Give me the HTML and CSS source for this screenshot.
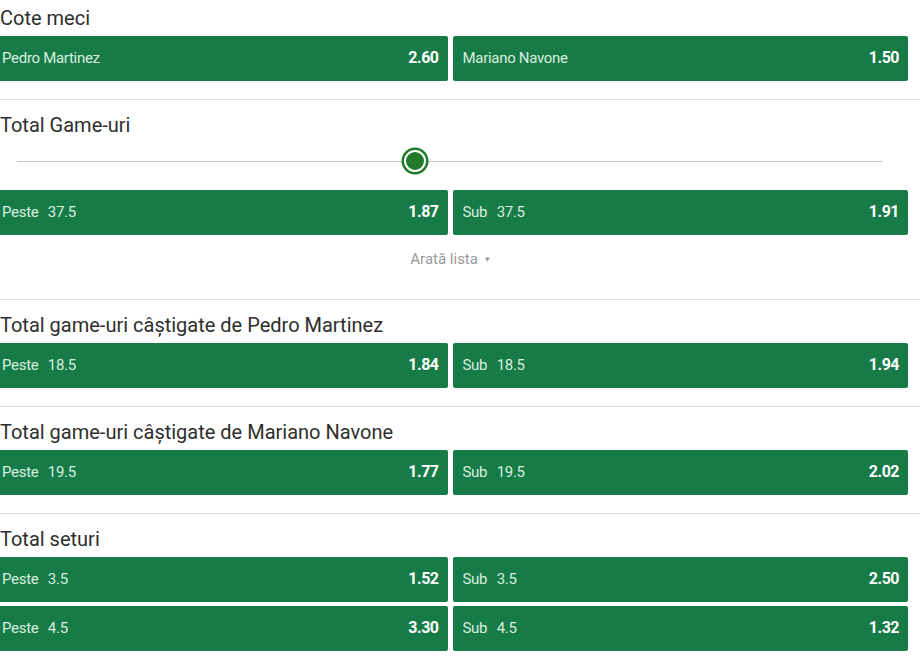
FILE: index.html
```html
<!DOCTYPE html>
<html lang="ro">
<head>
  <meta charset="UTF-8">
  <title>Cote meci</title>
  <link rel="stylesheet" href="styles.css">
</head>
<body>
  <div class="markets">

    <div class="market first">
      <h2>Cote meci</h2>
      <div class="odds">
        <div class="pick"><span class="label">Pedro Martinez</span><span class="price">2.60</span></div>
        <div class="pick"><span class="label">Mariano Navone</span><span class="price">1.50</span></div>
      </div>
    </div>
    <div class="divider"></div>

    <div class="market">
      <h2>Total Game-uri</h2>
      <div class="slider">
        <div class="track"></div>
        <div class="knob" style="left: 46.2%"></div>
      </div>
      <div class="odds">
        <div class="pick"><span class="label">Peste <span class="line">37.5</span></span><span class="price">1.87</span></div>
        <div class="pick"><span class="label">Sub <span class="line">37.5</span></span><span class="price">1.91</span></div>
      </div>
      <div class="show-more">Arată lista <span class="caret">&#9662;</span></div>
    </div>
    <div class="divider"></div>

    <div class="market">
      <h2>Total game-uri câștigate de Pedro Martinez</h2>
      <div class="odds">
        <div class="pick"><span class="label">Peste <span class="line">18.5</span></span><span class="price">1.84</span></div>
        <div class="pick"><span class="label">Sub <span class="line">18.5</span></span><span class="price">1.94</span></div>
      </div>
    </div>
    <div class="divider"></div>

    <div class="market">
      <h2>Total game-uri câștigate de Mariano Navone</h2>
      <div class="odds">
        <div class="pick"><span class="label">Peste <span class="line">19.5</span></span><span class="price">1.77</span></div>
        <div class="pick"><span class="label">Sub <span class="line">19.5</span></span><span class="price">2.02</span></div>
      </div>
    </div>
    <div class="divider"></div>

    <div class="market">
      <h2>Total seturi</h2>
      <div class="odds">
        <div class="pick"><span class="label">Peste <span class="line">3.5</span></span><span class="price">1.52</span></div>
        <div class="pick"><span class="label">Sub <span class="line">3.5</span></span><span class="price">2.50</span></div>
        <div class="pick"><span class="label">Peste <span class="line">4.5</span></span><span class="price">3.30</span></div>
        <div class="pick"><span class="label">Sub <span class="line">4.5</span></span><span class="price">1.32</span></div>
      </div>
    </div>

  </div>
</body>
</html>
```

FILE: styles.css
```css
body {
  margin: 0;
  font-family: Roboto, 'Liberation Sans', sans-serif;
  background-color: #fff;
  color: #222;
  overflow: hidden;
}
.markets {
  width: 916px;
  margin-left: -8px;
}
.market {
  padding: 13px 0 18px;
}
.market.first {
  padding-top: 6px;
}
h2 {
  margin: 0 0 6px 8px;
  font-size: 20px;
  font-weight: 400;
  line-height: 24px;
  color: #2e2e2e;
}
.divider {
  height: 1px;
  background-color: #dedede;
  margin-right: -20px;
}
.odds {
  display: grid;
  grid-template-columns: 1fr 1fr;
  gap: 4px 5px;
}
.pick {
  display: flex;
  align-items: center;
  justify-content: space-between;
  height: 45px;
  padding: 0 9px 2px 10px;
  box-sizing: border-box;
  background-color: #177b48;
  border-radius: 2px;
  cursor: pointer;
}
.label {
  font-size: 15px;
  color: #d8eedf;
  letter-spacing: -0.3px;
}
.line {
  margin-left: 6px;
}
.price {
  font-size: 16px;
  font-weight: 700;
  color: #fff;
  letter-spacing: -0.5px;
}
.slider {
  position: relative;
  height: 36px;
  margin: 0 26px 11px 25px;
}
.track {
  position: absolute;
  left: 0;
  right: 0;
  top: 18px;
  height: 1px;
  background-color: #c4c4c4;
}
.knob {
  position: absolute;
  top: 7px;
  width: 18px;
  height: 18px;
  margin-left: -13px;
  background-color: #217a2b;
  border: 2px solid #fff;
  border-radius: 50%;
  box-shadow: 0 0 0 2.5px #217a2b;
}
.show-more {
  padding: 14px 0 12px;
  line-height: 20px;
  text-align: center;
  font-size: 15px;
  color: #9a9a9a;
}
.caret {
  font-size: 9px;
  margin-left: 3px;
  vertical-align: 2px;
}
```
